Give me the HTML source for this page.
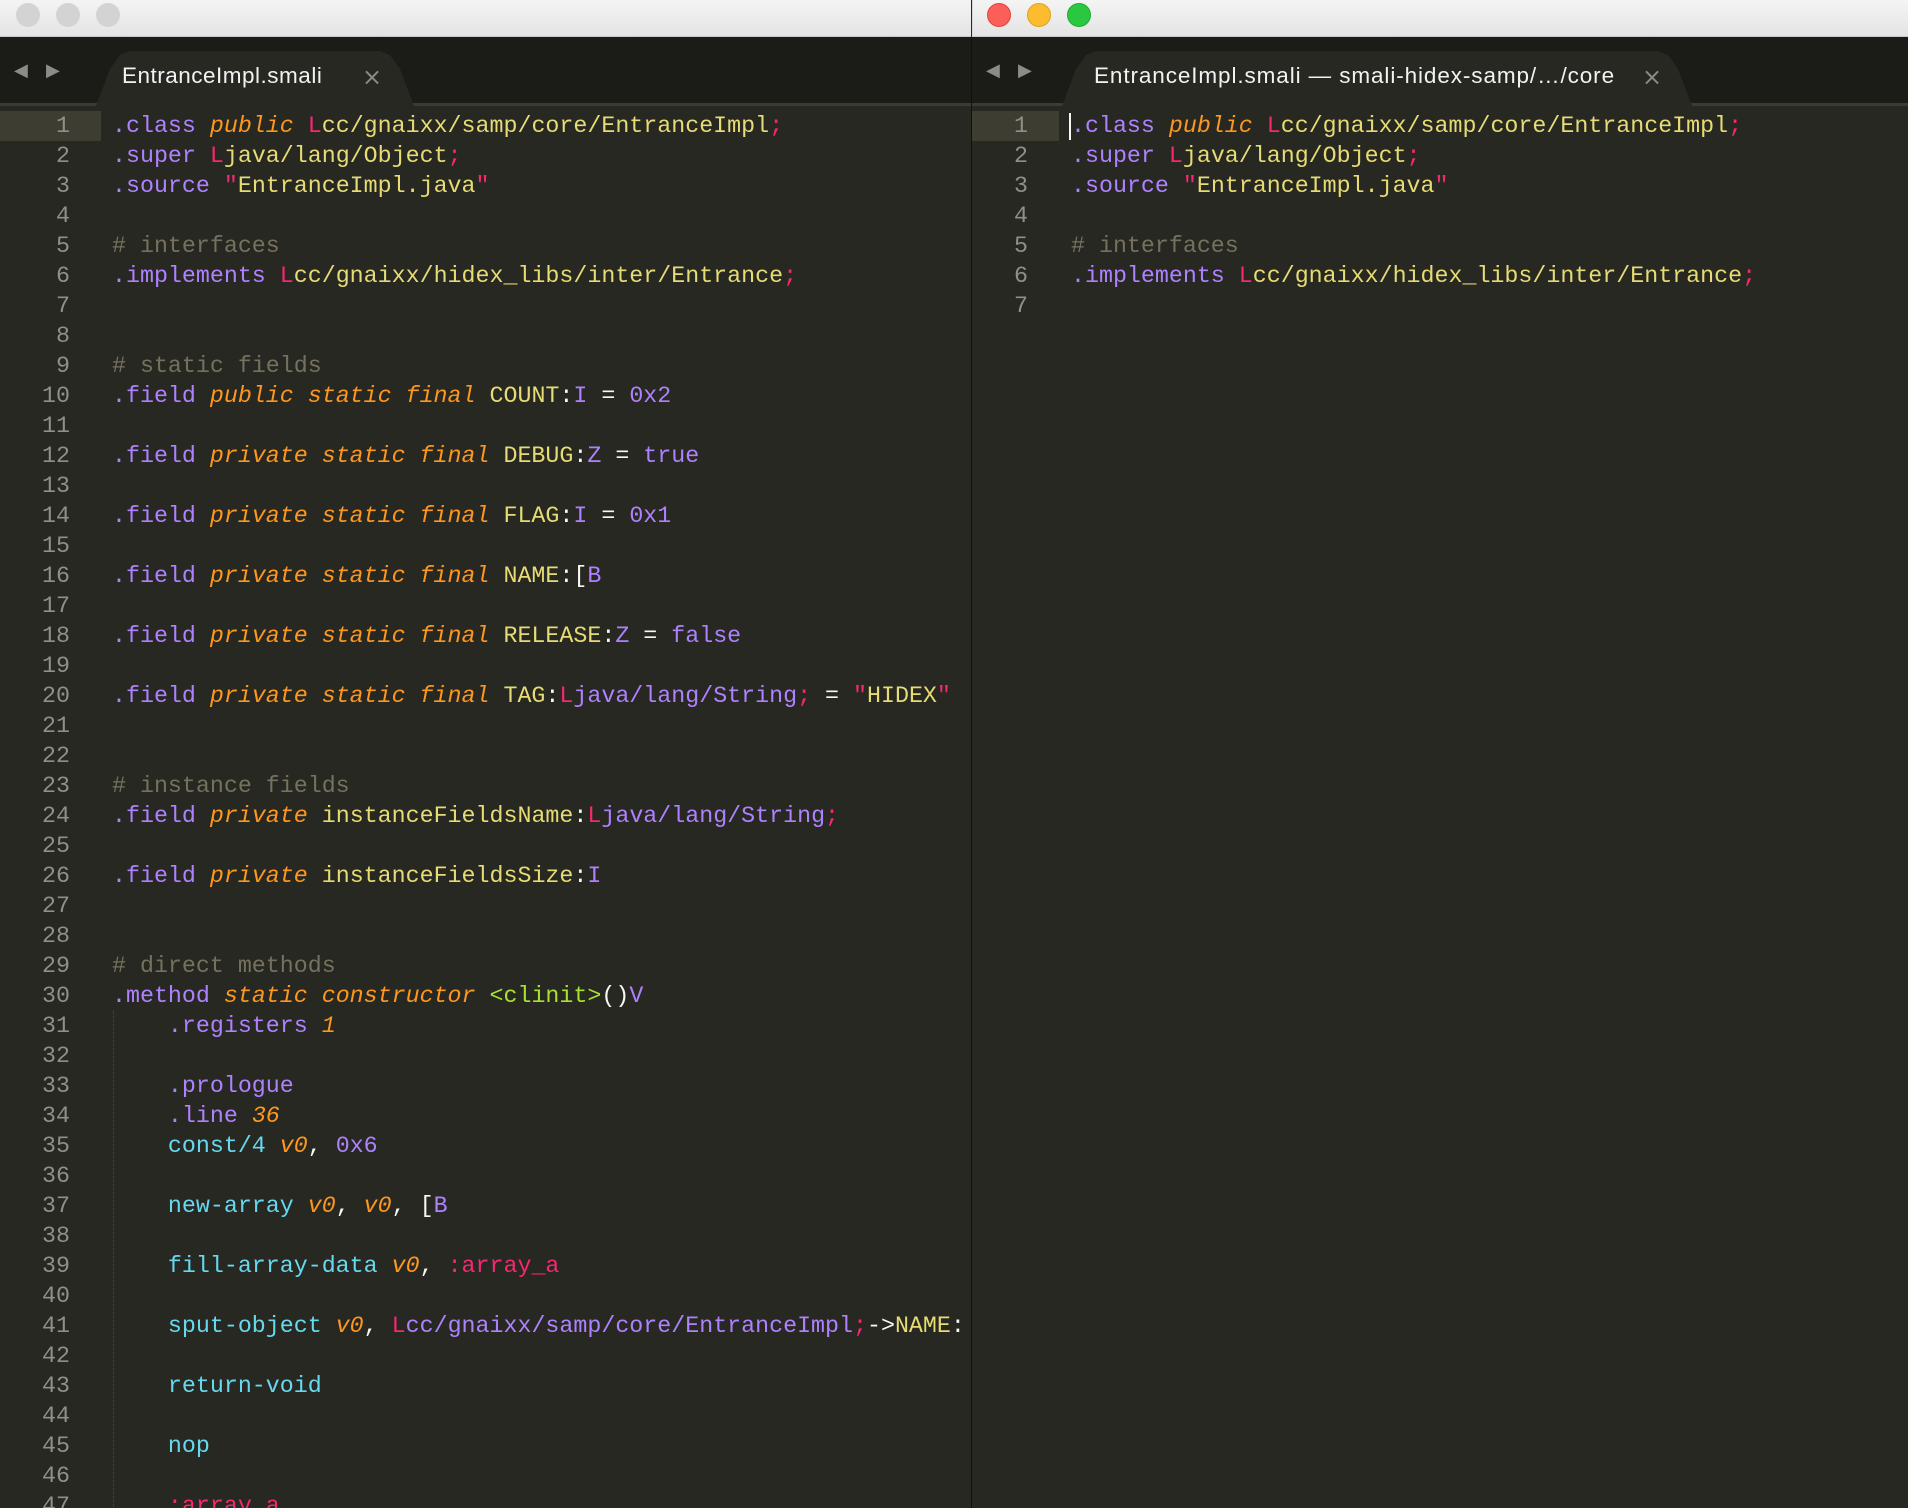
<!DOCTYPE html>
<html><head><meta charset="utf-8"><style>
*{margin:0;padding:0;box-sizing:border-box}
html,body{width:1908px;height:1508px;overflow:hidden}
body{background:#272822;position:relative;font-family:"Liberation Mono",monospace}
.title{position:absolute;top:0;height:37px;background:linear-gradient(#f4f4f4,#e4e4e4);border-bottom:1px solid #c8c8c8}
.dot{position:absolute;top:3px;width:24px;height:24px;border-radius:50%}
.tabbar{position:absolute;top:37px;height:69px;background:#1b1c18;border-bottom:3px solid #3a3b35}
.tab{position:absolute;height:55px;color:#f2f2f2;font-family:"Liberation Sans",sans-serif;font-size:22.5px;line-height:50px}
.tab .bg{position:absolute;left:0;top:0;width:100%;height:100%;background:#272822;clip-path:polygon(0 100%,14px 18px,24px 4px,34px 0,calc(100% - 34px) 0,calc(100% - 24px) 4px,calc(100% - 14px) 18px,100% 100%)}
.tab .t{position:absolute;top:0;white-space:nowrap}
.tab .x{position:absolute;top:1px;color:#8a8a86;font-size:24px;font-family:"DejaVu Sans",sans-serif}
.arr{position:absolute;color:#8b8b88;font-size:18px;font-family:"DejaVu Sans",sans-serif}
.pane{position:absolute;top:106px;height:1402px;overflow:hidden;background:#272822}
.gut{position:absolute;top:5px;text-align:right;color:#8f908a;font-size:23.3px;line-height:30px;white-space:pre}
.code{position:absolute;top:5px;font-size:23.3px;line-height:30px;white-space:pre;color:#f8f8f2}
.hl{position:absolute;top:5px;height:30px;background:#3e3d32}
.p{color:#ae81ff}.k{color:#fd971f;font-style:italic}.r{color:#f92672}.y{color:#e6db74}.c{color:#75715e}.b{color:#66d9ef}.g{color:#a6e22e}
</style></head><body>
<div class="title" style="left:0;width:971px"></div>
<div class="title" style="left:972px;width:936px;border-left:1px solid #d8d8d8"></div>
<div class="dot" style="left:16px;background:#d3d3d3"></div>
<div class="dot" style="left:56px;background:#d3d3d3"></div>
<div class="dot" style="left:96px;background:#d3d3d3"></div>
<div class="dot" style="left:987px;background:#fc5f57;border:1px solid #e0443e"></div>
<div class="dot" style="left:1027px;background:#fdbc2e;border:1px solid #dea123"></div>
<div class="dot" style="left:1067px;background:#2ac840;border:1px solid #1dad2b"></div>

<div class="tabbar" style="left:0;width:971px"></div>
<div class="tabbar" style="left:972px;width:936px"></div>
<div style="position:absolute;left:971px;top:37px;width:1px;height:1471px;background:#111"></div>
<div class="arr" style="left:14px;top:60px">◀</div><div class="arr" style="left:46px;top:60px">▶</div>
<div class="arr" style="left:986px;top:60px">◀</div><div class="arr" style="left:1018px;top:60px">▶</div>
<div class="tab" style="left:96px;top:51px;width:318px"><div class="bg"></div><span class="t" style="left:26px;letter-spacing:0.5px">EntranceImpl.smali</span><span class="x" style="left:266px">×</span></div>
<div class="tab" style="left:1062px;top:51px;width:630px"><div class="bg"></div><span class="t" style="left:32px;letter-spacing:0.9px">EntranceImpl.smali — smali-hidex-samp/…/core</span><span class="x" style="left:580px">×</span></div>

<div class="pane" style="left:0;width:971px">
<div class="hl" style="left:0;width:101px"></div>
<div style="position:absolute;left:113px;top:905px;width:0;height:500px;border-left:1px dotted #4a4a44"></div>
<div class="gut" style="left:0;width:70px">1
2
3
4
5
6
7
8
9
10
11
12
13
14
15
16
17
18
19
20
21
22
23
24
25
26
27
28
29
30
31
32
33
34
35
36
37
38
39
40
41
42
43
44
45
46
47</div>
<div class="code" style="left:112px"><span class="p">.class</span> <span class="k">public</span> <span class="r">L</span><span class="y">cc/gnaixx/samp/core/EntranceImpl</span><span class="r">;</span>
<span class="p">.super</span> <span class="r">L</span><span class="y">java/lang/Object</span><span class="r">;</span>
<span class="p">.source</span> <span class="r">"</span><span class="y">EntranceImpl.java</span><span class="r">"</span>

<span class="c"># interfaces</span>
<span class="p">.implements</span> <span class="r">L</span><span class="y">cc/gnaixx/hidex_libs/inter/Entrance</span><span class="r">;</span>


<span class="c"># static fields</span>
<span class="p">.field</span> <span class="k">public static final</span> <span class="y">COUNT</span>:<span class="p">I</span> = <span class="p">0x2</span>

<span class="p">.field</span> <span class="k">private static final</span> <span class="y">DEBUG</span>:<span class="p">Z</span> = <span class="p">true</span>

<span class="p">.field</span> <span class="k">private static final</span> <span class="y">FLAG</span>:<span class="p">I</span> = <span class="p">0x1</span>

<span class="p">.field</span> <span class="k">private static final</span> <span class="y">NAME</span>:[<span class="p">B</span>

<span class="p">.field</span> <span class="k">private static final</span> <span class="y">RELEASE</span>:<span class="p">Z</span> = <span class="p">false</span>

<span class="p">.field</span> <span class="k">private static final</span> <span class="y">TAG</span>:<span class="r">L</span><span class="p">java/lang/String</span><span class="r">;</span> = <span class="r">"</span><span class="y">HIDEX</span><span class="r">"</span>


<span class="c"># instance fields</span>
<span class="p">.field</span> <span class="k">private</span> <span class="y">instanceFieldsName</span>:<span class="r">L</span><span class="p">java/lang/String</span><span class="r">;</span>

<span class="p">.field</span> <span class="k">private</span> <span class="y">instanceFieldsSize</span>:<span class="p">I</span>


<span class="c"># direct methods</span>
<span class="p">.method</span> <span class="k">static constructor</span> <span class="g">&lt;clinit&gt;</span>()<span class="p">V</span>
    <span class="p">.registers</span> <span class="k">1</span>

    <span class="p">.prologue</span>
    <span class="p">.line</span> <span class="k">36</span>
    <span class="b">const/4</span> <span class="k">v0</span>, <span class="p">0x6</span>

    <span class="b">new-array</span> <span class="k">v0</span>, <span class="k">v0</span>, [<span class="p">B</span>

    <span class="b">fill-array-data</span> <span class="k">v0</span>, <span class="r">:array_a</span>

    <span class="b">sput-object</span> <span class="k">v0</span>, <span class="r">L</span><span class="p">cc/gnaixx/samp/core/EntranceImpl</span><span class="r">;</span>-&gt;<span class="y">NAME</span>:

    <span class="b">return-void</span>

    <span class="b">nop</span>

    <span class="r">:array_a</span></div>
</div>

<div class="pane" style="left:972px;width:936px">
<div class="hl" style="left:0;width:87px"></div>
<div style="position:absolute;left:97px;top:7px;width:2px;height:27px;background:#f8f8f0"></div>
<div class="gut" style="left:0;width:56px">1
2
3
4
5
6
7</div>
<div class="code" style="left:99px"><span class="p">.class</span> <span class="k">public</span> <span class="r">L</span><span class="y">cc/gnaixx/samp/core/EntranceImpl</span><span class="r">;</span>
<span class="p">.super</span> <span class="r">L</span><span class="y">java/lang/Object</span><span class="r">;</span>
<span class="p">.source</span> <span class="r">"</span><span class="y">EntranceImpl.java</span><span class="r">"</span>

<span class="c"># interfaces</span>
<span class="p">.implements</span> <span class="r">L</span><span class="y">cc/gnaixx/hidex_libs/inter/Entrance</span><span class="r">;</span>
</div>
</div>
</body></html>
